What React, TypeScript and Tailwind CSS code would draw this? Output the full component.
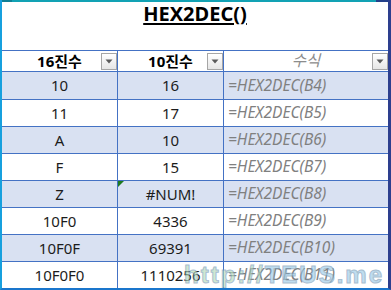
import React from 'react';

const rows = [
  { hex: '10', dec: '16', ref: 'B4' },
  { hex: '11', dec: '17', ref: 'B5' },
  { hex: 'A', dec: '10', ref: 'B6' },
  { hex: 'F', dec: '15', ref: 'B7' },
  { hex: 'Z', dec: '#NUM!', ref: 'B8', error: true },
  { hex: '10F0', dec: '4336', ref: 'B9' },
  { hex: '10F0F', dec: '69391', ref: 'B10' },
  { hex: '10F0F0', dec: '1110256', ref: 'B11' },
];

const FilterButton = () => (
  <div className="absolute right-0 bottom-[1px] w-[16px] h-[17px] border border-[#a6a6a6] bg-gradient-to-b from-white to-[#e6e6e6] flex items-center justify-center">
    <svg width="8" height="5" viewBox="0 0 8 5">
      <path d="M0.5 0.5 H7.5 L4 4.5 Z" fill="#5a5a5a" />
    </svg>
  </div>
);

const App: React.FC = () => {
  return (
    <div
      className="relative w-[391px] h-[290px] overflow-hidden bg-white border-l-2 border-l-[#17a0de] border-r-[3px] border-r-[#2d3f8e] border-b-2 border-b-[#1a76cc] text-[#1c1c1c]"
      style={{ fontFamily: '"Noto Sans", "Noto Sans CJK KR", sans-serif' }}
    >
      {/* top frame strip */}
      <div className="flex h-[2px]">
        <div className="w-[10px] bg-[#107f96]" />
        <div className="flex-1 bg-[#12a2b4]" />
        <div className="w-[12px] bg-[#23408a]" />
      </div>

      {/* Title */}
      <div className="h-[48px] flex justify-center">
        <h1 className="text-[20px] leading-[24px] font-bold underline underline-offset-[2px] text-black">HEX2DEC()</h1>
      </div>

      {/* Table */}
      <div className="grid grid-cols-[116px_106px_1fr] border-t border-[#4472c4]">
        {/* Header */}
        <div className="relative h-[21px] flex items-center justify-center border-r border-b border-[#4472c4] text-[15px] font-bold text-black">
          16진수
          <FilterButton />
        </div>
        <div className="relative h-[21px] flex items-center justify-center border-r border-b border-[#4472c4] text-[15px] font-bold text-black">
          10진수
          <FilterButton />
        </div>
        <div className="relative h-[21px] flex items-center justify-center border-b border-[#4472c4] text-[15.5px] italic text-[#8c8c8c]">
          수식
          <FilterButton />
        </div>

        {rows.map((r, i) => {
          const bg = i % 2 === 0 ? 'bg-[#d9e1f2]' : 'bg-white';
          const h = i === 0 ? 'h-[28px]' : i === rows.length - 1 ? 'h-[26px]' : 'h-[27px]';
          const bb = i === rows.length - 1 ? '' : 'border-b';
          return (
            <React.Fragment key={r.ref}>
              <div className={`${bg} ${h} ${bb} border-r border-[#4472c4] flex items-center justify-center text-[15px]`}>
                {r.hex}
              </div>
              <div className={`${bg} ${h} ${bb} relative border-r border-[#4472c4] flex items-center justify-center text-[15px]`}>
                {r.error && (
                  <span className="absolute top-0 left-0 w-0 h-0 border-t-[6px] border-t-[#1f7a1f] border-r-[6px] border-r-transparent" />
                )}
                {r.dec}
              </div>
              <div className={`${bg} ${h} ${bb} border-[#4472c4] flex items-center pl-[4px] text-[15.5px] italic text-[#808080]`}>
                =HEX2DEC({r.ref})
              </div>
            </React.Fragment>
          );
        })}
      </div>

      {/* Watermark */}
      <div
        className="absolute right-[4px] bottom-[1px] text-[24px] font-bold leading-none tracking-[2px] opacity-65 pointer-events-none"
        style={{ fontFamily: '"Liberation Sans", Arial, sans-serif', WebkitTextStroke: '1px #7a9cb8' }}
      >
        <span className="text-[#b6dcb8]">http://</span>
        <span className="text-[#9ccbe8]">TEUS.me</span>
      </div>
    </div>
  );
};

export default App;
